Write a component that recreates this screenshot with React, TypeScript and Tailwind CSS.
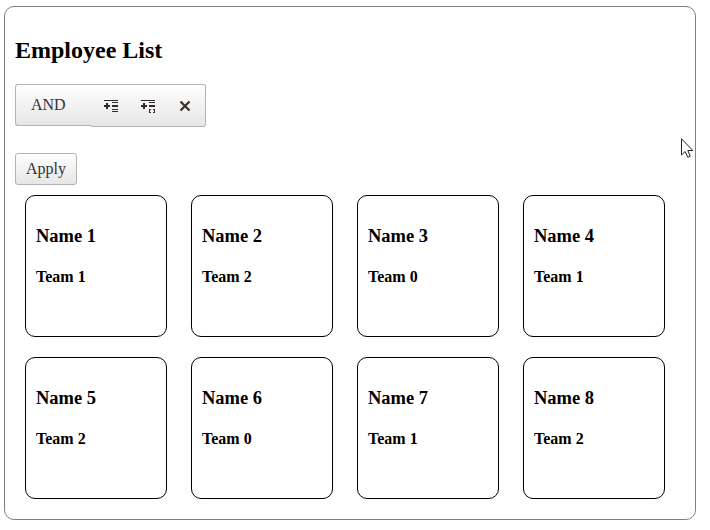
import React from "react";

const employees = Array.from({ length: 8 }, (_, i) => ({
  name: `Name ${i + 1}`,
  team: `Team ${(i + 1) % 3}`,
}));

function AddConditionIcon() {
  return (
    <svg width="16" height="16" viewBox="0 0 16 16" fill="#32292e" shapeRendering="crispEdges">
      <path d="M1 2h14v1H1zM9 4h6v1H9zM9 7h6v2H9zM9 11h6v1H9zM9 13h6v1H9zM3 5h2v6H3zM1 7h6v2H1z" />
    </svg>
  );
}

function AddGroupIcon() {
  return (
    <svg width="16" height="16" viewBox="0 0 16 16" fill="#32292e" shapeRendering="crispEdges">
      <path d="M1 2h14v1H1zM9 4h6v1H9zM9 7h6v2H9zM3 5h2v6H3zM1 7h6v2H1z" />
      <path d="M9 11h2v1h-1v1H9zM13 11h2v2h-1v-1h-1zM9 13h1v1h1v1H9zM14 13h1v2h-2v-1h1z" />
    </svg>
  );
}

function RemoveIcon() {
  return (
    <svg width="16" height="16" viewBox="0 0 16 16" fill="none" stroke="#3a302b" strokeWidth="2.2">
      <path d="M3.500 3.500l9 9M12.500 3.500l-9 9" />
    </svg>
  );
}

export default function App() {
  return (
    <div className="h-[530px] w-[710px] overflow-hidden bg-white pl-1 pt-1.5 font-['Liberation_Serif',serif] text-black">
      <main className="h-[514px] w-[692px] rounded-[10px] border border-[#808080] px-2.5 pt-[29px]">
        <h2 className="text-2xl leading-7 font-bold">Employee List</h2>
        <div className="mt-5 flex h-[43px] items-start text-[#333]">
          <button className="h-[42px] w-[76px] rounded-l-[3px] border border-r-0 border-[#b3b3b3] bg-linear-to-b from-white to-[#e6e6e6] pl-[15px] text-left text-base">AND</button>
          <div className="flex h-[43px] w-[115px] items-center gap-[21px] rounded-r-[3px] border border-l-0 border-[#b3b3b3] bg-linear-to-b from-white to-[#e6e6e6] pl-3">
            <button aria-label="Add condition"><AddConditionIcon /></button>
            <button aria-label="Add group"><AddGroupIcon /></button>
            <button aria-label="Remove"><RemoveIcon /></button>
          </div>
        </div>
        <button className="mt-[26px] block h-8 w-[62px] rounded-[3px] border border-[#b3b3b3] bg-linear-to-b from-white to-[#e6e6e6] text-base text-[#333]">Apply</button>
        <section className="mt-2.5 ml-2.5 grid grid-cols-[repeat(4,142px)] gap-x-6 gap-y-5">
          {employees.map((e) => (
            <article key={e.name} className="h-[142px] rounded-[10px] border border-black px-2.5 pt-[30px]">
              <h3 className="text-[18.5px] leading-[21px] font-bold">{e.name}</h3>
              <h4 className="mt-[21px] text-base leading-[18px] font-bold">{e.team}</h4>
            </article>
          ))}
        </section>
      </main>
      <svg className="absolute top-[138px] left-[681px]" width="13" height="21" viewBox="0 0 13 21" aria-hidden="true">
        <path d="M.5.800v16.200l3.700-3.500 2.600 5.800 2.500-1.100-2.500-5.700h5z" fill="white" stroke="#222231" />
      </svg>
    </div>
  );
}
